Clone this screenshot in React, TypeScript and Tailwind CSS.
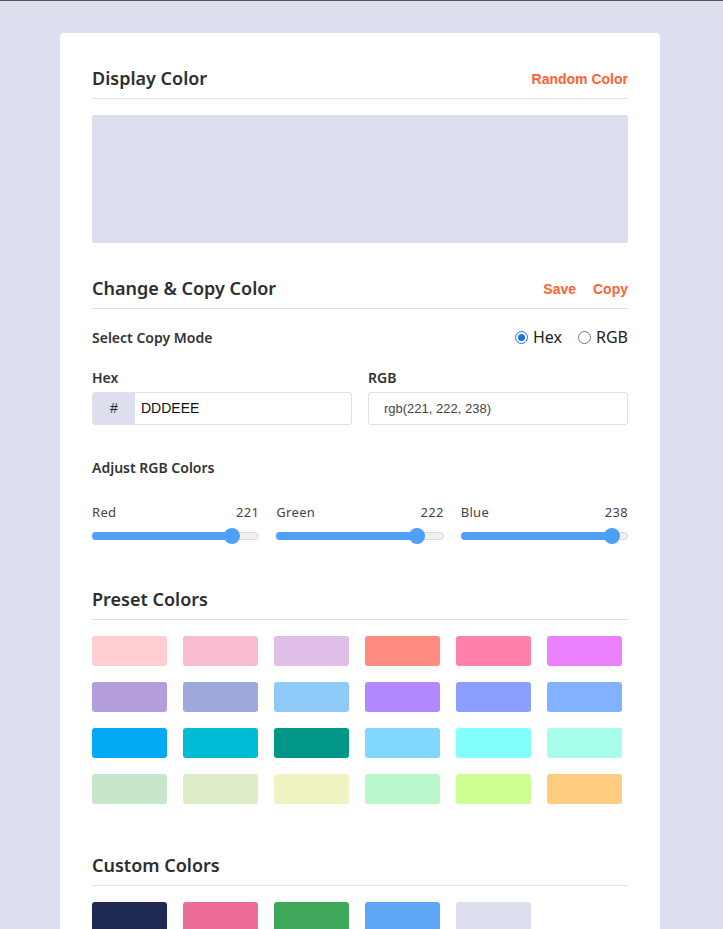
const presetColors = [
  '#ffcdd2', '#f8bbd0', '#e1bee7', '#ff8a80', '#ff80ab', '#ea80fc',
  '#b39ddb', '#9fa8da', '#90caf9', '#b388ff', '#8c9eff', '#82b1ff',
  '#03a9f4', '#00bcd4', '#009688', '#80d8ff', '#84ffff', '#a7ffeb',
  '#c8e6c9', '#dcedc8', '#f0f4c3', '#b9f6ca', '#ccff90', '#ffcc80',
];

const customColors = ['#1f2a52', '#ed6d9a', '#3fa75a', '#5fa5f5', '#dddeee'];

const channels = [
  { name: 'Red', value: 221 },
  { name: 'Green', value: 222 },
  { name: 'Blue', value: 238 },
];

function SectionHeader({ title, actions }: { title: string; actions?: string[] }) {
  return (
    <div className="flex items-center justify-between border-b border-[#e0e0ec] pb-[7px]">
      <h2 className="text-[18px] font-semibold text-[#2d2d2d] leading-[26px]">{title}</h2>
      {actions && (
        <div className="mt-[2px] flex gap-[17px] font-['Liberation_Sans',Arial,sans-serif] text-[14px] font-bold text-[#ff6132]">
          {actions.map((a) => (
            <span key={a}>{a}</span>
          ))}
        </div>
      )}
    </div>
  );
}

function Slider({ name, value }: { name: string; value: number }) {
  const pct = (value / 255) * 100;
  return (
    <div className="flex-1">
      <div className="flex justify-between text-[13px] text-[#444] tracking-[0.3px]">
        <span>{name}</span>
        <span>{value}</span>
      </div>
      <div className="relative mt-[9px] h-[8px] rounded-full bg-[#efefef] border border-[#dcdcdc]">
        <div className="absolute -left-px -top-px h-[8px] rounded-full bg-[#4f9ff7]" style={{ width: `calc(${pct}% - 4px)` }} />
        <div
          className="absolute top-1/2 h-[16px] w-[16px] -translate-x-1/2 -translate-y-1/2 rounded-full bg-[#4f9ff7]"
          style={{ left: `calc(${pct}% - 4px)` }}
        />
      </div>
    </div>
  );
}

export default function App() {
  return (
    <div className="min-h-[929px] bg-[#dddeee] border-t border-[#555] pt-[32px] font-['Noto_Sans',sans-serif]">
      <div className="ml-[60px] w-[600px] min-h-[896px] rounded-t-[4px] bg-white px-[32px] pt-[32px]">
        <SectionHeader title="Display Color" actions={['Random Color']} />
        <div className="mt-[16px] h-[128px] rounded-[3px] bg-[#dddeee]" />

        <div className="mt-[32px]">
          <SectionHeader title="Change & Copy Color" actions={['Save', 'Copy']} />
        </div>

        <div className="mt-[16px] flex items-center justify-between">
          <span className="text-[14px] font-semibold text-[#333]">Select Copy Mode</span>
          <div className="flex items-center gap-[16px] text-[16px] text-[#222]">
            <label className="flex items-center gap-[5px]">
              <span className="flex h-[13px] w-[13px] items-center justify-center rounded-full border-[1.5px] border-[#1a73e8]">
                <span className="h-[7px] w-[7px] rounded-full bg-[#1a73e8]" />
              </span>
              Hex
            </label>
            <label className="flex items-center gap-[5px]">
              <span className="h-[13px] w-[13px] rounded-full border border-[#767676]" />
              RGB
            </label>
          </div>
        </div>

        <div className="mt-[18px] flex gap-[16px]">
          <div className="flex-1">
            <div className="text-[14px] font-semibold text-[#333]">Hex</div>
            <div className="mt-[4px] flex h-[33px] overflow-hidden rounded-[3px] border border-[#e0e0ec]">
              <div className="flex w-[42px] items-center justify-center bg-[#dddeee] font-['Liberation_Sans',Arial,sans-serif] text-[14px] text-[#222]">#</div>
              <div className="flex items-center pl-[6px] font-['Liberation_Sans',Arial,sans-serif] text-[14px] text-[#111]">DDDEEE</div>
            </div>
          </div>
          <div className="flex-1">
            <div className="text-[14px] font-semibold text-[#333]">RGB</div>
            <div className="mt-[4px] flex h-[33px] items-center rounded-[3px] border border-[#e0e0ec] pl-[15px] font-['Liberation_Sans',Arial,sans-serif] text-[13px] text-[#444]">
              rgb(221, 222, 238)
            </div>
          </div>
        </div>

        <div className="mt-[32px] text-[14px] font-semibold text-[#333]">Adjust RGB Colors</div>

        <div className="mt-[25px] flex gap-[17px]">
          {channels.map((c) => (
            <Slider key={c.name} name={c.name} value={c.value} />
          ))}
        </div>

        <div className="mt-[46px]">
          <SectionHeader title="Preset Colors" />
        </div>
        <div className="mt-[16px] flex flex-wrap gap-[16px]">
          {presetColors.map((c) => (
            <div key={c} className="h-[30px] w-[75px] rounded-[3px]" style={{ backgroundColor: c }} />
          ))}
        </div>

        <div className="mt-[48px]">
          <SectionHeader title="Custom Colors" />
        </div>
        <div className="mt-[16px] flex flex-wrap gap-[16px]">
          {customColors.map((c) => (
            <div key={c} className="h-[30px] w-[75px] rounded-[3px]" style={{ backgroundColor: c }} />
          ))}
        </div>
      </div>
    </div>
  );
}
